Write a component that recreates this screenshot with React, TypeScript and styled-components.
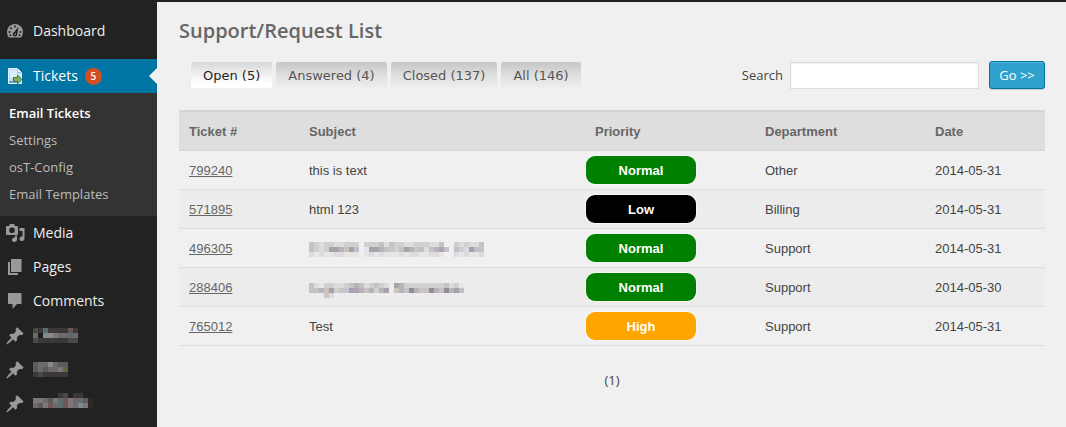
import React from "react";
import styled, { createGlobalStyle, css } from "styled-components";

const GlobalStyle = createGlobalStyle`
  *, *::before, *::after { box-sizing: border-box; }
  html, body { margin: 0; background: #f0f0f0; }
  body { font-family: "Open Sans", sans-serif; font-size: 13px; color: #444; }
`;

const Page = styled.div`
  display: flex;
  min-height: 100vh;
`;

const Sidebar = styled.nav`
  flex: 0 0 157px;
  padding-top: 14px;
  background: #222;
`;

const MenuLink = styled.a<{ $current?: boolean }>`
  position: relative;
  display: flex;
  align-items: center;
  height: 34px;
  padding-left: 5px;
  gap: 8px;
  margin-top: ${(p) => (p.$current ? "11px" : "0")};
  background: ${(p) => (p.$current ? "#0074a2" : "transparent")};
  color: #eee;
  font-size: 14px;
  line-height: 18px;
  text-decoration: none;
  ${(p) =>
    p.$current &&
    css`
      color: #fff;
      &::after {
        content: "";
        position: absolute;
        right: 0;
        top: 50%;
        margin-top: -8px;
        border: 8px solid transparent;
        border-right-color: #f0f0f0;
        border-left-width: 0;
      }
    `}
`;

const IconSlot = styled.span`
  display: flex;
  width: 20px;
  height: 20px;
  color: #999;
  svg { width: 20px; height: 20px; display: block; }
`;

const Count = styled.span`
  display: flex;
  align-items: center;
  justify-content: center;
  width: 17px;
  height: 17px;
  margin-left: -1px;
  border-radius: 50%;
  background: #d54e21;
  color: #fff;
  font-size: 10px;
  font-weight: 600;
`;

const Submenu = styled.ul`
  margin: 0;
  padding: 7px 0 8px;
  list-style: none;
  background: #333;
`;

const SubLink = styled.a<{ $current?: boolean }>`
  display: block;
  padding-left: 9px;
  height: 27px;
  line-height: 27px;
  color: ${(p) => (p.$current ? "#fff" : "#bbb")};
  font-weight: ${(p) => (p.$current ? 600 : 400)};
  text-decoration: none;
`;

const Main = styled.main`
  flex: 1;
  min-width: 0;
  padding: 14px 21px 20px 22px;
  border-top: 2px solid #222;
`;

const Title = styled.h1`
  margin: 0;
  color: #666;
  font-size: 20px;
  font-weight: 600;
  line-height: 30px;
`;

const Toolbar = styled.div`
  display: flex;
  justify-content: space-between;
  align-items: flex-start;
  padding: 15px 0 21px 12px;
`;

const Tabs = styled.div`
  display: flex;
  gap: 4px;
  padding-top: 1px;
`;

const Tab = styled.button<{ $active?: boolean }>`
  height: 26px;
  padding: 1px 12px 0;
  border: 0;
  border-radius: 2px;
  background: ${(p) =>
    p.$active ? "linear-gradient(#d8d8d8, #fff 80%)" : "linear-gradient(#c6c6c6, #e2e2e2 60%, #eee)"};
  color: ${(p) => (p.$active ? "#222" : "#555")};
  font: 13px/25px Verdana, "DejaVu Sans", sans-serif;
`;

const SearchForm = styled.form`
  display: flex;
  align-items: center;
`;

const SearchLabel = styled.label`
  margin-right: 7px;
`;

const SearchInput = styled.input`
  width: 189px;
  height: 27px;
  margin-right: 10px;
  border: 1px solid #ddd;
  background: #fff;
  box-shadow: inset 0 1px 2px rgba(0, 0, 0, 0.07);
  font: inherit;
`;

const GoButton = styled.button`
  width: 56px;
  height: 28px;
  padding: 0;
  border: 1px solid #0074a2;
  border-radius: 3px;
  background: #2ea2cc;
  box-shadow: inset 0 1px 0 rgba(120, 200, 230, 0.5), 0 1px 0 rgba(0, 0, 0, 0.15);
  color: #fff;
  font: 13px/26px "Open Sans", sans-serif;
`;

const Table = styled.table`
  width: 100%;
  table-layout: fixed;
  border-collapse: separate;
  border-spacing: 0;
  font: 13px/16px "Liberation Sans", Arial, sans-serif;
`;

const Th = styled.th`
  height: 41px;
  padding: 2px 10px 0;
  border-top: 2px solid #d4d4d4;
  border-bottom: 1px solid #d4d4d4;
  background: #dedede;
  color: #666;
  text-align: left;
`;

const Row = styled.tr`
  &:nth-child(even) { background: #ececec; }
`;

const Td = styled.td<{ $flush?: boolean }>`
  height: 39px;
  padding: ${(p) => (p.$flush ? "0 1px" : "2px 10px 0")};
  border-bottom: 1px solid #dedede;
  vertical-align: middle;
`;

const TicketLink = styled.a`
  color: #666;
  text-decoration: underline;
`;

const Priority = styled.span<{ $color: string }>`
  display: block;
  width: 110px;
  height: 28px;
  padding-top: 1px;
  border-radius: 9px;
  background: ${(p) => p.$color};
  box-shadow: 0 0 0 1px #f8f8f8;
  color: #fff;
  font-weight: bold;
  line-height: 27px;
  text-align: center;
`;

const Pager = styled.p`
  margin: 25px 0 0;
  text-align: center;
  line-height: 18px;
`;

const MosaicSvg = styled.svg`
  display: block;
  flex: none;
`;

/* Redacted text: each letter is an index into the palette, a space leaves the cell empty. */
function Mosaic({ rows, palette }: { rows: string[]; palette: string[] }) {
  const cols = Math.max(...rows.map((r) => r.length));
  return (
    <MosaicSvg width={cols * 5} height={rows.length * 5} shapeRendering="crispEdges" aria-hidden="true">
      {rows.flatMap((row, y) =>
        [...row].map((c, x) =>
          c === " " ? null : (
            <rect key={`${x}-${y}`} x={x * 5} y={y * 5} width="5" height="5" fill={palette[c.charCodeAt(0) - 97]} />
          )
        )
      )}
    </MosaicSvg>
  );
}

const light = ["#e6e6e6", "#dcdcde", "#d0d0d0", "#c4c2c2", "#b6b4ba", "#a6a2aa", "#968c96", "#c9c5d6", "#b0a0b8", "#bac2cc", "#ccc4bc"];
const dark = ["#2c2828", "#3a3838", "#4a4848", "#5c5a5a", "#6c6a6a", "#7c7678", "#8c8888", "#5c6c6e", "#7e8a90", "#6e5656", "#64643e", "#1c1c1c"];

const subjectA = [
  "dcbccbbccc cccdbdccbbcccbbd  cbcbbd",
  "dcbcffekfj affedhcdfekjbdeid jcbfjd",
  "babaabbaaa ababaaababbaabba  babaab",
];
const subjectB = [
  "",
  "dbaccbbcdedbcdcb feccccccccdbca",
  "ddekfckhfiedecef kedgekdgedgefd",
  "   kb",
];
const hiddenA = ["cbhbbbbjb", "eligfeehe", "cbbbbbbcc"];
const hiddenB = ["deegedd", "dedeefk", "bcbbbbb"];
const hiddenC = ["     bc bb", "ffedfhjfeeda", "edfjehjfeifa", ""];

const DashboardIcon = () => (
  <svg viewBox="0 0 20 20">
    <path fill="currentColor" d="M3.800 16.600Q2 14.300 2 11a8 8 0 0 1 16 0q0 3.300-1.800 5.600z" />
    <g fill="#222">
      <circle cx="10" cy="5.500" r="1" />
      <circle cx="6" cy="7.200" r="1" />
      <circle cx="4.500" cy="11" r="1" />
      <circle cx="15.500" cy="11" r="1" />
      <circle cx="5.400" cy="14.200" r="0.900" />
      <circle cx="14.600" cy="14.200" r="0.900" />
      <path d="M13.600 5.800 12.300 13a2.300 2.300 0 1 1-3-2z" />
    </g>
    <circle cx="10.200" cy="13.100" r="0.800" fill="currentColor" />
  </svg>
);

const TicketIcon = () => (
  <svg viewBox="0 0 20 20">
    <path d="M3.500 2.500h9l4 4v11h-13z" fill="#b9dcf4" stroke="#e8f5fd" />
    <path d="M5 4h7v4h4v4H5z" fill="#d8eefb" />
    <path d="M12.500 2.500v4h4" fill="#fff" stroke="#8fc3e8" />
    <path d="M4 16h8" stroke="#4a90c8" strokeWidth="1.500" />
    <path d="M8.500 11.500h4V9l4.500 4.400-4.500 4.400v-2.500h-4z" fill="#7cb55a" stroke="#3f7a30" />
  </svg>
);

const MediaIcon = () => (
  <svg viewBox="0 0 20 20">
    <path fill="currentColor" fillRule="evenodd" d="M2 3h2l1-2h4l1 2h2q1 0 1 1v7q0 1-1 1H2q-1 0-1-1V4q0-1 1-1zM7 4.500a2.800 2.800 0 1 0 0 5.600a2.800 2.800 0 0 0 0-5.600z" />
    <path fill="currentColor" d="M14.500 5h5v10.800a2.500 2.200 0 1 1-2-2.200V8h-3zM12 12.500v4.300a2.500 2.200 0 1 1-2-2.200v-2.100z" />
  </svg>
);

const PagesIcon = () => (
  <svg viewBox="0 0 20 20">
    <path fill="currentColor" d="M6 2h10.500v13H6zM3 5h2v11h8v2H3z" />
  </svg>
);

const CommentsIcon = () => (
  <svg viewBox="0 0 20 20">
    <path fill="currentColor" d="M4 2h11.500q1 0 1 1v9q0 1-1 1H12l-4.500 5V13H4q-1 0-1-1V3q0-1 1-1z" />
  </svg>
);

const PinIcon = () => (
  <svg viewBox="0 -1 20 20">
    <path fill="currentColor" d="M10.440 3.020l1.820-1.820 6.360 6.350-1.830 1.820c-1.050-.68-2.480-.57-3.410.36l-.75.750c-.92.930-1.040 2.350-.35 3.410l-1.830 1.820-2.410-2.410-2.800 2.790c-.42.420-3.380 2.710-3.800 2.290s1.860-3.390 2.280-3.810l2.790-2.790L4.100 9.360l1.830-1.820c1.050.690 2.480.570 3.400-.360l.75-.750c.930-.920 1.050-2.350.360-3.410z" />
  </svg>
);

const tickets = [
  { id: "799240", subject: "this is text", priority: "Normal", department: "Other", date: "2014-05-31" },
  { id: "571895", subject: "html 123", priority: "Low", department: "Billing", date: "2014-05-31" },
  { id: "496305", subject: <Mosaic rows={subjectA} palette={light} />, priority: "Normal", department: "Support", date: "2014-05-31" },
  { id: "288406", subject: <Mosaic rows={subjectB} palette={light} />, priority: "Normal", department: "Support", date: "2014-05-30" },
  { id: "765012", subject: "Test", priority: "High", department: "Support", date: "2014-05-31" },
];

const priorityColors: Record<string, string> = { Normal: "green", Low: "#000", High: "orange" };

function MenuItem({ icon, children, current }: { icon: React.ReactNode; children: React.ReactNode; current?: boolean }) {
  return (
    <MenuLink href="#" $current={current}>
      <IconSlot>{icon}</IconSlot>
      {children}
    </MenuLink>
  );
}

export default function App() {
  return (
    <Page>
      <GlobalStyle />
      <Sidebar>
        <MenuItem icon={<DashboardIcon />}>Dashboard</MenuItem>
        <MenuItem icon={<TicketIcon />} current>Tickets<Count>5</Count></MenuItem>
        <Submenu>
          <li><SubLink href="#" $current>Email Tickets</SubLink></li>
          <li><SubLink href="#">Settings</SubLink></li>
          <li><SubLink href="#">osT-Config</SubLink></li>
          <li><SubLink href="#">Email Templates</SubLink></li>
        </Submenu>
        <MenuItem icon={<MediaIcon />}>Media</MenuItem>
        <MenuItem icon={<PagesIcon />}>Pages</MenuItem>
        <MenuItem icon={<CommentsIcon />}>Comments</MenuItem>
        <MenuItem icon={<PinIcon />}><Mosaic rows={hiddenA} palette={dark} /></MenuItem>
        <MenuItem icon={<PinIcon />}><Mosaic rows={hiddenB} palette={dark} /></MenuItem>
        <MenuItem icon={<PinIcon />}><Mosaic rows={hiddenC} palette={dark} /></MenuItem>
      </Sidebar>
      <Main>
        <Title>Support/Request List</Title>
        <Toolbar>
          <Tabs>
            <Tab type="button" $active>Open (5)</Tab>
            <Tab type="button">Answered (4)</Tab>
            <Tab type="button">Closed (137)</Tab>
            <Tab type="button">All (146)</Tab>
          </Tabs>
          <SearchForm onSubmit={(e) => e.preventDefault()}>
            <SearchLabel htmlFor="search">Search</SearchLabel>
            <SearchInput id="search" type="text" />
            <GoButton type="submit">Go &gt;&gt;</GoButton>
          </SearchForm>
        </Toolbar>
        <Table>
          <colgroup>
            <col width="120" />
            <col />
            <col width="170" />
            <col width="170" />
            <col width="120" />
          </colgroup>
          <thead>
            <tr>
              <Th>Ticket #</Th>
              <Th>Subject</Th>
              <Th>Priority</Th>
              <Th>Department</Th>
              <Th>Date</Th>
            </tr>
          </thead>
          <tbody>
            {tickets.map((t) => (
              <Row key={t.id}>
                <Td><TicketLink href="#">{t.id}</TicketLink></Td>
                <Td>{t.subject}</Td>
                <Td $flush><Priority $color={priorityColors[t.priority]}>{t.priority}</Priority></Td>
                <Td>{t.department}</Td>
                <Td>{t.date}</Td>
              </Row>
            ))}
          </tbody>
        </Table>
        <Pager>(1)</Pager>
      </Main>
    </Page>
  );
}
